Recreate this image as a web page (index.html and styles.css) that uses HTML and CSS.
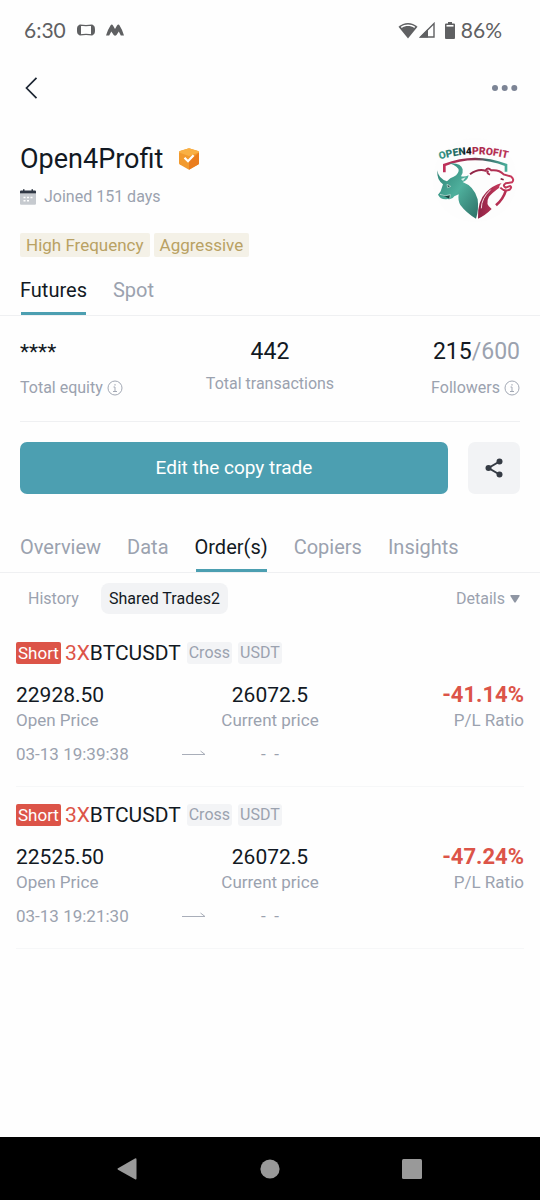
FILE: index.html
```html
<!DOCTYPE html>
<html lang="en">
<head>
    <meta charset="utf-8">
    <meta name="viewport" content="width=device-width, initial-scale=1">
    <title>Open4Profit</title>
    <link rel="stylesheet" href="styles.css">
</head>
<body>
    <div class="status-bar">
        <span class="clock">6:30</span>
        <svg class="status-icon" width="18" height="12" viewBox="0 0 18 12" fill="#5f6062">
            <path d="M3 1.200Q9 2 15 1.200V10.800Q9 10 3 10.800z" fill="none" stroke="#5f6062" stroke-width="1.200"/>
            <path d="M4 1v10C.6 11.200 0 9.500 0 6S.6.8 4 1zM14 1v10c3.400.2 4-1.500 4-5s-.6-5.200-4-5z"/>
        </svg>
        <svg class="status-icon" width="18" height="12" viewBox="0 0 18 12" fill="#5f6062">
            <path d="M0 11.500Q1.500 6 4.500 1.500Q5.800-.3 7 1.500L9 5L11 1.500Q12.500-.3 13.600 1.500Q16.500 6 18 11.500H14.800L12.800 7.500L10.500 11Q9 12.300 7.700 11L5.300 7.500L3.200 11.500z"/>
        </svg>
        <div class="status-right">
            <svg width="20" height="17" viewBox="0 0 20 17">
                <path d="M10 16.500L.5 4.800C6 -.4 14 -.4 19.500 4.800z" fill="#5f6062"/>
                <path d="M2.800 4.800C7 1.600 13 1.600 17.200 4.800L16.300 5.900C12.500 3.300 7.500 3.300 3.700 5.900z" fill="#fff"/>
            </svg>
            <svg width="16" height="16" viewBox="0 0 16 16">
                <path d="M15 1.500V15H1.500z" fill="none" stroke="#5f6062" stroke-width="1.400"/>
                <path d="M9 7v8.500H.8z" fill="#5f6062"/>
            </svg>
            <svg class="battery" width="10" height="17" viewBox="0 0 10 17" fill="#5f6062">
                <path d="M3 0h4v1.500h2q1 0 1 1V16q0 1-1 1H1q-1 0-1-1V2.500q0-1 1-1h2z"/>
                <path d="M1.500 3h7v1.600h-7z" fill="#fff"/>
            </svg>
            <span>86%</span>
        </div>
    </div>

    <header class="top-bar">
        <button class="icon-btn" aria-label="Back">
            <svg width="14" height="22" viewBox="0 0 14 22" fill="none" stroke="#1d2633" stroke-width="1.700">
                <path d="M12.500 .8L2.500 11L12.500 21.200"/>
            </svg>
        </button>
        <button class="icon-btn" aria-label="More">
            <svg width="28" height="8" viewBox="0 0 28 8" fill="#7c8495">
                <circle cx="5" cy="4" r="3"/><circle cx="14.700" cy="4" r="3"/><circle cx="24.300" cy="4" r="3"/>
            </svg>
        </button>
    </header>

    <section class="profile">
        <div class="profile-info">
            <h1>Open4Profit
                <svg width="20" height="22" viewBox="0 0 20 22">
                    <path d="M10 .3L19 3q1 .4 1 1.400V15q0 1-.8 1.500L10 21.700L.8 16.500Q0 16 0 15V4.400Q0 3.400 1 3z" fill="#f29a2e"/>
                    <path d="M10 .3L19 3q1 .4 1 1.400L10 8L0 4.400Q0 3.400 1 3z" fill="#f9b044"/>
                    <path d="M20 4.400V15q0 1-.8 1.500L10 21.700V13z" fill="#ea7d1e"/>
                    <path d="M5.500 9.800L9 13.200L14.600 7.200" fill="none" stroke="#fff" stroke-width="2.200"/>
                </svg>
            </h1>
            <p class="joined">
                <svg width="16" height="16" viewBox="0 0 16 16">
                    <path d="M0 5h16v9.500q0 1.200-1.200 1.200H1.200Q0 15.700 0 14.500z" fill="#c6cacf"/>
                    <path d="M0 4.600V2.500q0-1 1-1h2V.3h1.500v1.200h7V.3H13v1.200h2q1 0 1 1v2.100z" fill="#2f3744"/>
                    <path d="M3.500 8.500h2m1.500 0h2m1.500 0h2M3.500 11.800h2m1.500 0h2" stroke="#fff" stroke-width="1.400"/>
                </svg>
                Joined 151 days
            </p>
            <div class="tags">
                <span class="tag">High Frequency</span>
                <span class="tag">Aggressive</span>
            </div>
        </div>
        <svg class="avatar" width="88" height="88" viewBox="21 15 264 264">
            <defs>
                <linearGradient id="bull" x1="0" y1="0" x2="1" y2="1">
                    <stop offset="0" stop-color="#2b7f72"/><stop offset=".5" stop-color="#4fb09d"/><stop offset="1" stop-color="#2c6f66"/>
                </linearGradient>
                <linearGradient id="bear" x1="0" y1="0" x2="1" y2="0">
                    <stop offset="0" stop-color="#8d2345"/><stop offset="1" stop-color="#c93a5d"/>
                </linearGradient>
                <linearGradient id="crest" x1="0" y1="0" x2="1" y2="0">
                    <stop offset="0" stop-color="#c0305a"/><stop offset=".5" stop-color="#8a2f4d"/><stop offset=".7" stop-color="#3d6f6c"/><stop offset="1" stop-color="#48ab98"/>
                </linearGradient>
                <linearGradient id="word" x1="0" y1="0" x2="1" y2="0">
                    <stop offset="0" stop-color="#43a391"/><stop offset=".36" stop-color="#174f4b"/><stop offset=".37" stop-color="#16181c"/>
                    <stop offset=".46" stop-color="#16181c"/><stop offset=".47" stop-color="#a82b4c"/><stop offset="1" stop-color="#bb3457"/>
                </linearGradient>
                <path id="arc" d="M44 86Q148 54 262 86"/>
            </defs>
            <circle cx="150" cy="147" r="127" fill="#fdfdfd"/>
            <text class="avatar-text" fill="url(#word)"><textPath href="#arc">OPEN4PROFIT</textPath></text>
            <path d="M58 124V102Q150 66 243 102V122" fill="none" stroke="url(#crest)" stroke-width="8"/>
            <path d="M37 118Q40 143 66 151L76 142Q98 134 101 120Q102 106 72 97Q108 94 113 115Q115 125 108 136Q120 138 131 133Q128 148 113 153Q148 166 158 205Q162 236 153 263Q124 246 106 222Q98 208 101 190L88 196Q82 207 68 204Q48 208 39 191L47 181L54 160Q35 147 37 118z" fill="url(#bull)"/>
            <path d="M66 160L77 166L68 170zM45 190Q60 198 76 191L74 203" fill="#163f3b" stroke="#d7efe9" stroke-width="2"/>
            <path d="M108 144L122 139L114 150" fill="#d7efe9"/>
            <path d="M135 130Q158 112 182 119Q187 106 199 118Q222 115 236 130L259 137Q269 146 261 154L242 157Q231 163 242 170L255 165Q262 168 255 175Q240 184 226 170M190 119Q183 126 195 131" fill="none" stroke="url(#bear)" stroke-width="6"/>
            <path d="M227 143l9 3" stroke="#7d1e3a" stroke-width="5"/>
            <path d="M159 263Q156 211 184 183Q202 164 230 156Q221 166 223 170Q202 185 192 197Q179 219 200 234Q180 254 159 263z" fill="url(#bear)"/>
            <path d="M169 232Q169 202 197 176" fill="none" stroke="#f5d9e0" stroke-width="3"/>
            <path d="M242 180Q235 204 213 223" fill="none" stroke="#b52f52" stroke-width="8"/>
        </svg>
    </section>

    <nav class="tabs">
        <button class="tab active">Futures</button>
        <button class="tab">Spot</button>
    </nav>

    <section class="stats">
        <div class="stat">
            <div class="stat-value stars">****</div>
            <div class="stat-label with-info">Total equity
                <svg width="16" height="16" viewBox="0 0 16 16" fill="none" stroke="#a3a9b5"><circle cx="8" cy="8" r="7"/><path d="M8 4v1.600M6.500 7H8v4.500M6 11.500h4"/></svg>
            </div>
        </div>
        <div class="stat">
            <div class="stat-value">442</div>
            <div class="stat-label">Total transactions</div>
        </div>
        <div class="stat">
            <div class="stat-value">215<span class="limit">/600</span></div>
            <div class="stat-label with-info">Followers
                <svg width="16" height="16" viewBox="0 0 16 16" fill="none" stroke="#a3a9b5"><circle cx="8" cy="8" r="7"/><path d="M8 4v1.600M6.500 7H8v4.500M6 11.500h4"/></svg>
            </div>
        </div>
    </section>

    <div class="actions">
        <button class="copy-btn">Edit the copy trade</button>
        <button class="share-btn" aria-label="Share">
            <svg width="18" height="20" viewBox="0 0 18 20" fill="#353b44">
                <path d="M14.500 3.500L3.500 10L14.500 16.500" fill="none" stroke="#353b44" stroke-width="2"/>
                <circle cx="14.500" cy="3.500" r="3"/><circle cx="3.500" cy="10" r="3"/><circle cx="14.500" cy="16.500" r="3"/>
            </svg>
        </button>
    </div>

    <nav class="tabs section-tabs">
        <button class="tab">Overview</button>
        <button class="tab">Data</button>
        <button class="tab active">Order(s)</button>
        <button class="tab">Copiers</button>
        <button class="tab">Insights</button>
    </nav>

    <div class="filters">
        <button class="filter">History</button>
        <button class="filter selected">Shared Trades2</button>
        <label class="details">
            <select aria-label="Details"><option>Details</option></select>
            <svg width="10" height="8" viewBox="0 0 10 8" fill="#8f96a3"><path d="M1 0h8q1 0 .6 1L5.700 7.300q-.7.900-1.400 0L.4 1Q0 0 1 0z"/></svg>
        </label>
    </div>

    <main>
        <article class="order">
            <div class="order-head">
                <span class="side">Short</span>
                <h2><span class="leverage">3X</span>BTCUSDT</h2>
                <span class="chip">Cross</span>
                <span class="chip">USDT</span>
            </div>
            <div class="prices">
                <div><div class="price">22928.50</div><div class="price-label">Open Price</div></div>
                <div><div class="price">26072.5</div><div class="price-label">Current price</div></div>
                <div><div class="price loss">-41.14%</div><div class="price-label">P/L Ratio</div></div>
            </div>
            <div class="times">
                <div class="opened"><time>03-13 19:39:38</time>
                    <svg width="24" height="8" viewBox="0 0 24 8" fill="none" stroke="#a9aeb9"><path d="M0 4.500h23L18.500 1"/></svg>
                </div>
                <span>- &nbsp;-</span>
            </div>
        </article>
        <article class="order">
            <div class="order-head">
                <span class="side">Short</span>
                <h2><span class="leverage">3X</span>BTCUSDT</h2>
                <span class="chip">Cross</span>
                <span class="chip">USDT</span>
            </div>
            <div class="prices">
                <div><div class="price">22525.50</div><div class="price-label">Open Price</div></div>
                <div><div class="price">26072.5</div><div class="price-label">Current price</div></div>
                <div><div class="price loss">-47.24%</div><div class="price-label">P/L Ratio</div></div>
            </div>
            <div class="times">
                <div class="opened"><time>03-13 19:21:30</time>
                    <svg width="24" height="8" viewBox="0 0 24 8" fill="none" stroke="#a9aeb9"><path d="M0 4.500h23L18.500 1"/></svg>
                </div>
                <span>- &nbsp;-</span>
            </div>
        </article>
    </main>

    <footer class="system-nav">
        <button class="icon-btn" aria-label="System back"><svg width="20" height="22" viewBox="0 0 20 22" fill="#999"><path d="M18 .5q1.500-.7 1.500 1v19q0 1.500-1.500.8L1 11.700q-1-.7 0-1.400z"/></svg></button>
        <button class="icon-btn" aria-label="Home"><svg width="20" height="20" viewBox="0 0 20 20" fill="#999"><circle cx="10" cy="10" r="9.600"/></svg></button>
        <button class="icon-btn" aria-label="Recent apps"><svg width="20" height="20" viewBox="0 0 20 20" fill="#999"><rect width="20" height="20" rx="1.500"/></svg></button>
    </footer>
</body>
</html>
```
FILE: styles.css
```css
* {
    box-sizing: border-box;
    margin: 0;
}

body {
    display: flex;
    flex-direction: column;
    min-height: 100vh;
    background: #fefefe;
    color: #121923;
    font-family: Roboto, "Noto Sans", sans-serif;
    font-size: 16px;
    line-height: 22px;
}

button, select {
    padding: 0;
    border: none;
    background: none;
    color: inherit;
    font: inherit;
    cursor: pointer;
}

svg {
    display: block;
    flex: none;
}

/* status bar */
.status-bar {
    display: flex;
    align-items: center;
    height: 60px;
    padding: 0 38px 0 24px;
    color: #5f6062;
    font-family: Lato, Roboto, sans-serif;
    font-size: 21px;
}

.status-icon {
    margin-left: 11px;
}

.status-right {
    display: flex;
    align-items: center;
    gap: 1px;
    margin-left: auto;
}

.battery {
    margin: 0 5px 0 9px;
}

.top-bar {
    display: flex;
    align-items: center;
    justify-content: space-between;
    height: 56px;
    padding: 0 22px 0 24px;
}

/* profile */
.profile {
    display: flex;
    justify-content: space-between;
    align-items: flex-start;
    padding: 20px 20px 0;
}

.profile-info {
    padding-top: 8px;
}

h1 {
    display: flex;
    align-items: center;
    gap: 16px;
    font-size: 27px;
    font-weight: 400;
    line-height: 30px;
}

.joined {
    display: flex;
    align-items: center;
    gap: 8px;
    margin-top: 12px;
    color: #9ba2af;
}

.tags {
    display: flex;
    gap: 4px;
    margin-top: 25px;
}

.tag {
    padding: 0 6px;
    border-radius: 2px;
    background: #f4f1e7;
    color: #b9a163;
    font-size: 17px;
    line-height: 24px;
}

.avatar-text {
    font-size: 31px;
    font-weight: 900;
}

/* tabs */
.tabs {
    display: flex;
    gap: 26px;
    margin-top: 21px;
    padding: 0 20px;
    border-bottom: 1px solid #eff0f2;
}

.section-tabs {
    margin-top: 41px;
}

.tab {
    position: relative;
    padding-bottom: 13px;
    color: #9ba2af;
    font-size: 20px;
    line-height: 24px;
}

.tab.active {
    color: #121923;
}

.tab.active::after {
    content: "";
    position: absolute;
    right: 1px;
    bottom: 0;
    left: 1px;
    height: 3px;
    background: #4c9fb1;
}

/* stats */
.stats {
    display: grid;
    grid-template-columns: 1fr 1fr 1fr;
    margin: 0 20px;
    padding: 22px 0 18px;
    border-bottom: 1px solid #eff0f2;
}

.stat:nth-child(2) {
    text-align: center;
}

.stat:nth-child(3) {
    text-align: right;
}

.stat-value {
    margin-bottom: 7px;
    font-size: 23px;
    line-height: 28px;
}

.stars {
    font-size: 21px;
}

.limit {
    color: #9ba2af;
}

.stat-label {
    color: #9ba2af;
}

.with-info {
    display: flex;
    align-items: center;
    gap: 4px;
    line-height: 30px;
}

.stat:nth-child(3) .with-info {
    justify-content: flex-end;
}

.actions {
    display: flex;
    gap: 20px;
    padding: 20px 20px 0;
}

.copy-btn {
    flex: 1;
    height: 52px;
    border-radius: 7px;
    background: #4c9fb1;
    color: #fff;
    font-size: 19px;
}

.share-btn {
    display: flex;
    align-items: center;
    justify-content: center;
    width: 52px;
    height: 52px;
    border-radius: 7px;
    background: #f2f3f5;
}

/* order filters */
.filters {
    display: flex;
    align-items: center;
    gap: 14px;
    margin: 10px 0 11px;
    padding: 0 20px;
    color: #9ba2af;
}

.filter {
    height: 31px;
    padding: 0 8px;
    border-radius: 8px;
}

.filter.selected {
    background: #f2f3f5;
    color: #121923;
}

.details {
    display: flex;
    align-items: center;
    gap: 5px;
    margin-left: auto;
}

.details select {
    appearance: none;
}

/* orders */
.order {
    margin: 0 16px;
    padding: 14px 0 21px;
    border-bottom: 1px solid #f6f7f8;
}

.order-head {
    display: flex;
    align-items: center;
    margin-bottom: 15px;
}

.side {
    margin-right: 4px;
    padding: 0 2px;
    border-radius: 2px;
    background: #dc5448;
    color: #fff;
    font-size: 17px;
}

h2 {
    font-size: 21px;
    font-weight: 400;
    line-height: 28px;
}

.leverage {
    color: #dc5448;
}

.chip {
    margin-left: 6px;
    padding: 0 2px;
    border-radius: 3px;
    background: #f3f4f6;
    color: #9ba2af;
}

.prices {
    display: grid;
    grid-template-columns: 1fr 1fr 1fr;
}

.prices > :nth-child(2) {
    text-align: center;
}

.prices > :nth-child(3) {
    text-align: right;
}

.price {
    margin-bottom: 1px;
    font-size: 21px;
    line-height: 26px;
}

.loss {
    color: #dc5448;
    font-size: 22px;
    font-weight: 700;
}

.price-label {
    color: #9ba2af;
    font-size: 17px;
}

.times {
    display: grid;
    grid-template-columns: 1fr 128px 1fr;
    margin-top: 12px;
    color: #9ba2af;
    font-size: 17px;
    text-align: center;
}

.opened {
    display: flex;
    align-items: center;
    justify-content: space-between;
}

/* android navigation */
.system-nav {
    display: flex;
    align-items: center;
    justify-content: space-between;
    height: 63px;
    margin-top: auto;
    padding: 0 118px 0 117px;
    background: #000;
}
```
